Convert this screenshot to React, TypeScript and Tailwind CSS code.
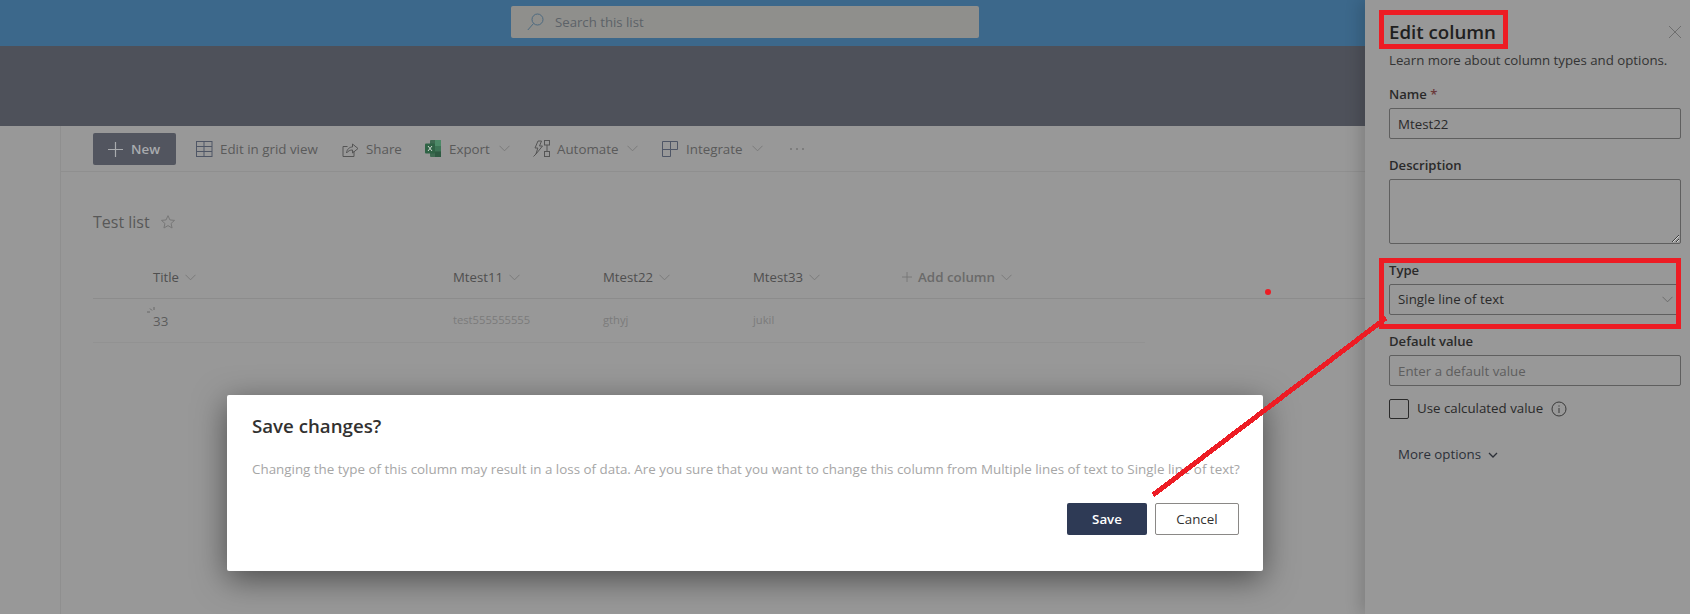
import React from "react";

const font = { fontFamily: '"Open Sans", "Noto Sans", sans-serif' };

function Chev({ className = "" }: { className?: string }) {
  return (
    <svg width="11" height="7" viewBox="0 0 11 7" fill="none" className={className}>
      <path d="M0.5 0.8 L5.5 5.8 L10.5 0.8" stroke="currentColor" strokeWidth="0.9" />
    </svg>
  );
}

function GridIcon() {
  return (
    <svg width="17" height="16" viewBox="0 0 17 16" fill="none" stroke="#4f5666" strokeWidth="1">
      <rect x="0.5" y="0.5" width="15.5" height="15" />
      <path d="M0.5 5.5H16M0.5 10.5H16M8 0.5V15.5" />
    </svg>
  );
}
function ShareIcon() {
  return (
    <svg width="17" height="16" viewBox="0 0 17 16" fill="none" stroke="#555" strokeWidth="1">
      <path d="M5.5 5.5H1V15.5H12V10" />
      <path d="M4.5 12C5 8 7.5 6 10.5 6V3L16 7.5 10.5 12V9C8 9 6 10 4.5 12Z" />
    </svg>
  );
}
function ExcelIcon() {
  return (
    <svg width="17" height="17" viewBox="0 0 17 17">
      <rect x="5" y="0" width="11" height="17" rx="1" fill="#3f6b52" />
      <rect x="10" y="0" width="6" height="6" fill="#4d8a68" />
      <rect x="10" y="6" width="6" height="5.5" fill="#3d7556" />
      <rect x="10" y="11.5" width="6" height="5.5" fill="#2e5a42" />
      <rect x="0" y="3.5" width="10" height="10" rx="1" fill="#2f6345" />
      <path d="M3 6 L7 11 M7 6 L3 11" stroke="#cfd8d2" strokeWidth="1" />
    </svg>
  );
}
function AutomateIcon() {
  return (
    <svg width="17" height="17" viewBox="0 0 17 17" fill="none" stroke="#555" strokeWidth="1">
      <path d="M5 1H8.5L6.5 6H9.5L3 14 4.8 8H2Z" />
      <rect x="11.5" y="0.5" width="5" height="4.5" />
      <rect x="11.5" y="11.5" width="5" height="5" />
      <path d="M14 5V11.5" />
      <path d="M0.5 16.5 L3 14" />
    </svg>
  );
}
function IntegrateIcon() {
  return (
    <svg width="16" height="16" viewBox="0 0 16 16" fill="none" stroke="#4f5666" strokeWidth="1">
      <path d="M0.5 0.5H15.5V8.5H8.5V15.5H0.5ZM8.5 0.5V8.5M0.5 8.5H8.5" />
    </svg>
  );
}

function Tool({ w, icon, label, chev }: { w: string; icon: React.ReactNode; label: string; chev?: boolean }) {
  return (
    <div className={`flex items-center text-[13.35px] text-[#5a5a5a] ${w}`}>
      <span className="w-[24px] shrink-0 flex items-center">{icon}</span>
      <span className="whitespace-nowrap">{label}</span>
      {chev && <Chev className="ml-[9px] text-[#777]" />}
    </div>
  );
}

function ColHead({ w, label }: { w: string; label: string }) {
  return (
    <div className={`flex items-center gap-[6px] text-[13.2px] text-[#4f4f4f] ${w}`}>
      <span>{label}</span>
      <Chev className="text-[#777]" />
    </div>
  );
}

const fieldCls =
  "block w-[292px] h-[31px] border border-[#5f5f5f] rounded-[2px] bg-transparent px-[8px] text-[13.3px] outline-none";
const labelCls = "h-[20px] leading-[20px] text-[13.1px] font-semibold text-[#2a2a2a]";

export default function App() {
  return (
    <div style={font} className="relative w-[1690px] h-[614px] overflow-hidden bg-[#989898]">
      {/* top bar */}
      <div className="h-[46px] bg-[#3c688b] pl-[511px] pt-[6px]">
        <div className="w-[468px] h-[32px] bg-[#8f8f8c] rounded-[2px] flex items-center pl-[16px]">
          <svg width="17" height="18" viewBox="0 0 17 18" fill="none" stroke="#4d6a80" strokeWidth="1">
            <circle cx="10.5" cy="6.5" r="5.5" />
            <path d="M6.5 10.5 L0.8 17" />
          </svg>
          <span className="ml-[11px] pt-[1px] text-[13.2px] text-[#5c6268]">Search this list</span>
        </div>
      </div>
      <div className="h-[80px] bg-[#4e515a]" />

      {/* body */}
      <div className="flex h-[488px]">
        <div className="w-[61px] border-r border-[#8f8f8f] shrink-0" />
        <div className="flex-1 min-w-0">
          <div className="h-[46px] border-b border-[#8f8f8f] flex items-center pl-[32px] pt-[1px]">
            <div className="w-[83px] h-[32px] bg-[#52555f] rounded-[2px] flex items-center pl-[15px] text-[13.35px] font-semibold text-[#a9abae]">
              <svg width="15" height="15" viewBox="0 0 15 15" stroke="#a9abae" strokeWidth="1.2">
                <path d="M7.5 0V15M0 7.5H15" />
              </svg>
              <span className="ml-[8px]">New</span>
            </div>
            <div className="w-[20px]" />
            <Tool w="w-[146px]" icon={<GridIcon />} label="Edit in grid view" />
            <Tool w="w-[83px]" icon={<ShareIcon />} label="Share" />
            <Tool w="w-[108px]" icon={<ExcelIcon />} label="Export" chev />
            <Tool w="w-[129px]" icon={<AutomateIcon />} label="Automate" chev />
            <Tool w="w-[128px]" icon={<IntegrateIcon />} label="Integrate" chev />
            <div className="flex gap-[4px]">
              <span className="w-[2px] h-[2px] bg-[#7d7d7d]" />
              <span className="w-[2px] h-[2px] bg-[#7d7d7d]" />
              <span className="w-[2px] h-[2px] bg-[#7d7d7d]" />
            </div>
          </div>

          <div className="pl-[32px] pt-[37px]">
            <div className="flex items-center h-[26px] text-[#585858]">
              <span className="text-[16px]">Test list</span>
              <svg width="16" height="16" viewBox="0 0 24 24" fill="none" stroke="#777" strokeWidth="1.5" className="ml-[10px]">
                <path d="M12 2.5l2.9 6.4 6.9.7-5.2 4.6 1.5 6.8L12 17.4l-6.1 3.6 1.5-6.8L2.2 9.6l6.9-.7z" />
              </svg>
            </div>
            <div className="mt-[24px] h-[40px] border-b border-[#8c8c8c] flex items-center pl-[60px] pb-[2px]">
              <ColHead w="w-[300px]" label="Title" />
              <ColHead w="w-[150px]" label="Mtest11" />
              <ColHead w="w-[150px]" label="Mtest22" />
              <ColHead w="w-[149px]" label="Mtest33" />
              <div className="flex items-center text-[13.35px] text-[#6a6a6a]">
                <svg width="10" height="10" viewBox="0 0 10 10" stroke="#777" strokeWidth="0.9">
                  <path d="M5 0V10M0 5H10" />
                </svg>
                <span className="ml-[6px] font-semibold">Add column</span>
                <Chev className="ml-[6px] text-[#777]" />
              </div>
            </div>
            <div className="w-[1052px] h-[44px] border-b border-[#929292] flex items-center pl-[60px] text-[#7b7b7b]">
              <div className="w-[300px] relative text-[13.35px] text-[#5c5c5c] pt-[1px]">
                33
                <svg width="8" height="8" viewBox="0 0 8 8" stroke="#5c5c5c" strokeWidth="0.8" className="absolute left-[-6px] top-[-3px]">
                  <path d="M7 0V3M3 1.5L5 3.5M0 5H3" />
                </svg>
              </div>
              <div className="w-[150px] text-[11.2px]">test555555555</div>
              <div className="w-[150px] text-[11.2px]">gthyj</div>
              <div className="text-[11.2px]">jukil</div>
            </div>
          </div>
        </div>
      </div>

      {/* edit column panel */}
      <div className="absolute top-0 right-0 w-[325px] h-full bg-[#989898] shadow-[-6px_0_14px_rgba(0,0,0,0.14)] pl-[24px] text-[#222]">
        <div className="flex items-center h-[64px] pt-[1px] text-[18.7px] font-semibold text-[#202020]">Edit column</div>
        <div className="h-[21px] -mt-[14px] text-[13.25px] leading-[21px] text-[#333]">Learn more about column types and options.</div>
        <div className={`mt-[13px] ${labelCls}`}>
          Name <span className="text-[#6b3b3b]">*</span>
        </div>
        <input readOnly value="Mtest22" className={`${fieldCls} mt-[4px] text-[#2a2a2a]`} />
        <div className={`mt-[16px] ${labelCls}`}>Description</div>
        <textarea readOnly className="block mt-[4px] w-[292px] h-[65px] border border-[#5f5f5f] rounded-[2px] bg-transparent outline-none" />
        <div className={`mt-[16px] ${labelCls}`}>Type</div>
        <div className={`${fieldCls} mt-[4px] flex items-center justify-between pr-[8px] text-[#2a2a2a]`}>
          <span>Single line of text</span>
          <Chev className="text-[#666] mr-[-1px]" />
        </div>
        <div className={`mt-[16px] ${labelCls}`}>Default value</div>
        <input readOnly placeholder="Enter a default value" className={`${fieldCls} mt-[4px] placeholder:text-[#5e5e5e]`} />
        <div className="mt-[13px] flex items-center h-[20px] text-[13.3px] text-[#2a2a2a]">
          <span className="w-[20px] h-[20px] border border-[#2a2a2a] rounded-[2px]" />
          <span className="ml-[8px]">Use calculated value</span>
          <svg width="16" height="16" viewBox="0 0 16 16" fill="none" stroke="#3a3a3a" className="ml-[8px]">
            <circle cx="8" cy="8" r="7" />
            <path d="M8 7V12M8 4.4V5.6" />
          </svg>
        </div>
        <div className="mt-[26px] pl-[9px] flex items-center h-[20px] text-[13.3px] text-[#2c3038]">
          More options
          <svg width="10" height="7" viewBox="0 0 10 7" fill="none" stroke="#2c3038" strokeWidth="1.3" className="ml-[7px]">
            <path d="M1 1L5 5L9 1" />
          </svg>
        </div>
        <svg width="14" height="14" viewBox="0 0 14 14" stroke="#6e6e6e" strokeWidth="1" className="absolute top-[25px] right-[8px]">
          <path d="M1 1L13 13M13 1L1 13" />
        </svg>
      </div>

      {/* dialog */}
      <div className="absolute left-[227px] top-[395px] w-[1036px] h-[176px] bg-white rounded-[2px] shadow-[0_8px_32px_rgba(0,0,0,0.5)] pl-[25px]">
        <div className="pt-[17px] h-[48px] text-[18.7px] font-semibold text-[#323130] leading-[28px]">Save changes?</div>
        <div className="mt-[16px] h-[20px] text-[13.38px] leading-[20px] text-[#a6a6a6] whitespace-nowrap">
          Changing the type of this column may result in a loss of data. Are you sure that you want to change this column from Multiple lines of text to Single line of text?
        </div>
        <div className="mt-[24px] flex justify-end gap-[8px] pr-[24px]">
          <button className="w-[80px] h-[32px] bg-[#2e3a55] rounded-[2px] text-white text-[13.35px] font-semibold">Save</button>
          <button className="w-[84px] h-[32px] bg-white border border-[#8a8886] rounded-[2px] text-[#323130] text-[13.35px]">Cancel</button>
        </div>
      </div>

      {/* annotations */}
      <div className="absolute left-[1379px] top-[10px] w-[129px] h-[39px] border-[5px] border-[#ed1c24]" />
      <div className="absolute left-[1379px] top-[258px] w-[302px] h-[71px] border-[5px] border-[#ed1c24]" />
      <div className="absolute left-[1265px] top-[289px] w-[6px] h-[6px] rounded-full bg-[#ed1c24]" />
      <svg width="260" height="200" viewBox="0 0 260 200" className="absolute left-[1140px] top-[305px]">
        <path d="M246 13 L13 190" stroke="#ed1c24" strokeWidth="5" shapeRendering="crispEdges" />
      </svg>
    </div>
  );
}
